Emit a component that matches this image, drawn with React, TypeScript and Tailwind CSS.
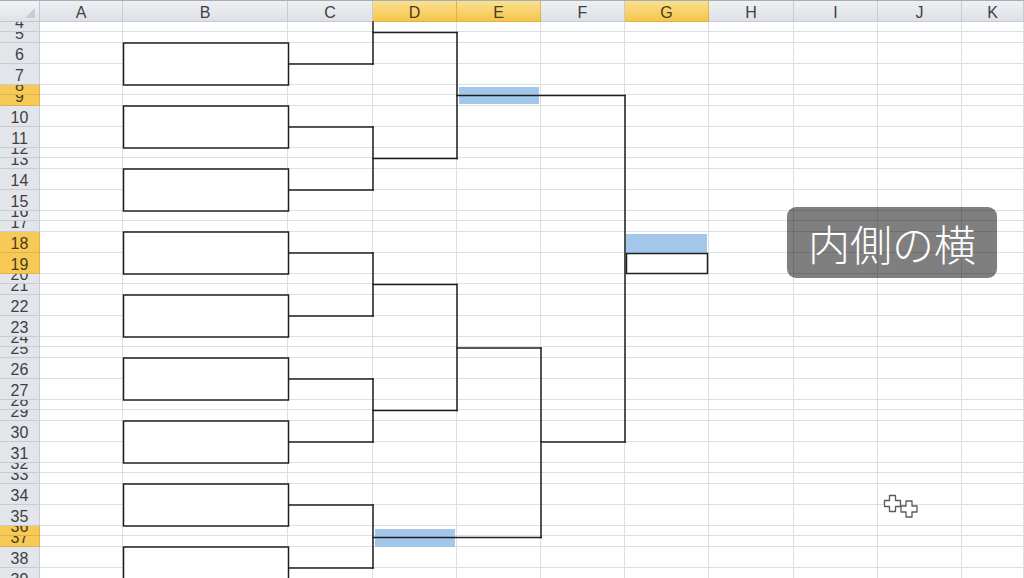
import React from "react";

type Col = { l: string; w: string; sel?: boolean };

const cols: Col[] = [
  { l: "A", w: "w-[83px]" },
  { l: "B", w: "w-[165px]" },
  { l: "C", w: "w-[85px]" },
  { l: "D", w: "w-[84px]", sel: true },
  { l: "E", w: "w-[84px]", sel: true },
  { l: "F", w: "w-[84px]" },
  { l: "G", w: "w-[84px]", sel: true },
  { l: "H", w: "w-[85px]" },
  { l: "I", w: "w-[84px]" },
  { l: "J", w: "w-[84px]" },
  { l: "K", w: "w-[62px]" },
];

const selRows = new Set([8, 9, 18, 19, 36, 37]);

const rows: { n: number; h: string }[] = [];
for (let n = 4; n <= 39; n++) {
  const m = n % 4;
  rows.push({ n, h: m === 0 ? "h-[10px]" : m === 1 ? "h-[11px]" : "h-[21px]" });
}

const boxMids = [64, 127, 190, 253, 316, 379, 442, 505, 568];

function Bracket() {
  const s = "#1f1f1f";
  const w = 1.5;
  const L = (x1: number, y1: number, x2: number, y2: number, k: string) => (
    <line key={k} x1={x1} y1={y1} x2={x2} y2={y2} stroke={s} strokeWidth={w} strokeLinecap="square" />
  );
  const els: React.ReactNode[] = [];
  boxMids.forEach((m, i) => {
    els.push(
      <rect key={"b" + i} x={123.5} y={m - 21} width={165} height={42} fill="white" stroke={s} strokeWidth={w} />
    );
    els.push(L(289, m, 373, m, "h" + i));
  });
  // round 1 verticals
  els.push(L(373, 22, 373, 64, "v0"));
  els.push(L(373, 127, 373, 190, "v1"));
  els.push(L(373, 253, 373, 316, "v2"));
  els.push(L(373, 379, 373, 442, "v3"));
  els.push(L(373, 505, 373, 568, "v4"));
  // round 2 horizontals
  els.push(L(373, 32.5, 457, 32.5, "r0"));
  els.push(L(373, 158.5, 457, 158.5, "r1"));
  els.push(L(373, 284.5, 457, 284.5, "r2"));
  els.push(L(373, 410.5, 457, 410.5, "r3"));
  els.push(L(373, 537.5, 541, 537.5, "r4"));
  // round 2 verticals
  els.push(L(457, 32.5, 457, 158.5, "q0"));
  els.push(L(457, 284.5, 457, 410.5, "q1"));
  // round 3
  els.push(L(457, 95.5, 625, 95.5, "s0"));
  els.push(L(457, 348, 541, 348, "s1"));
  els.push(L(541, 348, 541, 537.5, "s2"));
  els.push(L(541, 442, 625, 442, "s3"));
  els.push(L(625, 95.5, 625, 442, "s4"));
  // winner cell
  els.push(<rect key="win" x={626.5} y={253.5} width={81} height={20} fill="none" stroke={s} strokeWidth={w} />);
  return (
    <svg className="absolute left-0 top-0 pointer-events-none" width={1024} height={578} viewBox="0 0 1024 578">
      {els}
    </svg>
  );
}

function Cursor() {
  const plus = "M5 0h6v5h5v6h-5v5h-6v-5h-5v-6h5z";
  return (
    <svg className="absolute left-[882px] top-[493px] pointer-events-none" width={40} height={28} viewBox="0 0 40 28">
      <g transform="translate(2.5 2.5)">
        <path d={plus} fill="#fff" stroke="#5a5a5a" strokeWidth={1.3} strokeLinejoin="round" />
      </g>
      <g transform="translate(19 8)">
        <path d={plus} fill="#fff" stroke="#5a5a5a" strokeWidth={1.3} strokeLinejoin="round" />
      </g>
    </svg>
  );
}

export default function App() {
  return (
    <div
      className="relative w-[1024px] h-[578px] overflow-hidden bg-white text-[#3a3a3a]"
      style={{ fontFamily: '"Liberation Sans", Arial, sans-serif' }}
    >
      {/* column header */}
      <div className="flex h-[22px] border-t border-[#a7adb5]">
        <div className="relative w-[40px] shrink-0 border-r border-b border-[#c3c8cf] bg-linear-to-b from-[#f1f3f6] to-[#dfe3e8]">
          <div className="absolute right-[4px] bottom-[3px] w-0 h-0 border-l-[10px] border-l-transparent border-b-[10px] border-b-[#c9cdd3]" />
        </div>
        {cols.map((c) => (
          <div
            key={c.l}
            className={
              c.w +
              " shrink-0 flex items-end justify-center leading-none text-[16px] border-r border-b " +
              (c.sel
                ? "bg-linear-to-b from-[#fbe08f] to-[#f5c54a] border-[#e2b14a] text-[#4a3c1c]"
                : "bg-linear-to-b from-[#eef0f3] to-[#dde1e6] border-[#c6cbd2] text-[#3f3f3f]")
            }
          >
            <span className="pb-[0px]">{c.l}</span>
          </div>
        ))}
      </div>

      {/* body */}
      <div className="flex flex-col">
        {rows.map((r) => (
          <div key={r.n} className={"flex shrink-0 " + r.h}>
            <div
              className={
                "w-[40px] shrink-0 overflow-hidden flex items-end justify-center leading-none text-[16px] border-r border-b " +
                (selRows.has(r.n)
                  ? "bg-[#f7c957] border-[#e2b14a] text-[#4a3c1c]"
                  : "bg-[#e2e5e9] border-[#c7ccd2] text-[#3f3f3f]")
              }
            >
              <span>{r.n}</span>
            </div>
            {cols.map((c) => (
              <div key={c.l} className={c.w + " shrink-0 border-r border-b border-[#dcdfe3]"} />
            ))}
          </div>
        ))}
      </div>

      {/* animated highlights */}
      <div className="absolute left-[459px] top-[87px] w-[80px] h-[17px] bg-[#a3c7ea]" />
      <div className="absolute left-[626px] top-[234px] w-[81px] h-[19px] bg-[#a3c7ea]" />
      <div className="absolute left-[375px] top-[529px] w-[80px] h-[18px] bg-[#a3c7ea]" />

      <Bracket />

      {/* caption */}
      <div className="absolute left-[787px] top-[207px] w-[210px] h-[71px] rounded-[9px] bg-black/50 flex items-center justify-center">
        <span
          className="text-white text-[42px] font-light leading-none tracking-[0px]"
          style={{ fontFamily: '"Noto Sans CJK JP", "Noto Sans", sans-serif' }}
        >
          内側の横
        </span>
      </div>

      <Cursor />
    </div>
  );
}
